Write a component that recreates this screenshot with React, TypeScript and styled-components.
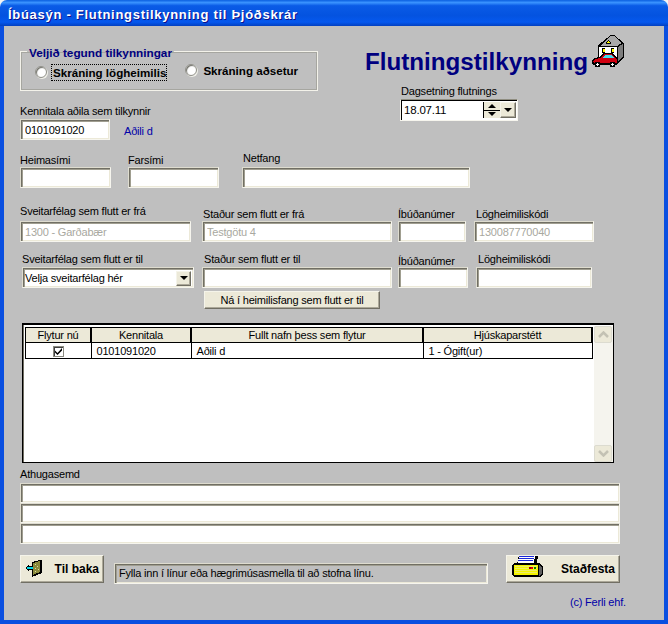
import styled, { createGlobalStyle } from "styled-components";

const sunken = `
  border: 1px solid;
  border-color: #dedccf #f6f5ee #f6f5ee #dedccf;
  box-shadow: inset 1px 1px 0 #716f64, inset 2px 2px 0 #a09e90, inset -1px -1px 0 #ece9d8;
`;

const raised = `
  border: 1px solid;
  border-color: #f5f4ea #716f64 #716f64 #f5f4ea;
  box-shadow: inset -1px -1px 0 #aca899;
  background: #ece9d8;
`;

const GlobalStyle = createGlobalStyle`
  html, body {
    margin: 0;
    padding: 0;
    background: #f4f4f4;
  }
  body {
    font-family: "Liberation Sans", Arial, sans-serif;
    font-size: 11px;
    letter-spacing: -0.2px;
    color: #000;
  }
`;

function HouseCarIcon() {
  return (
    <svg width="34" height="33" viewBox="0 0 34 33" shapeRendering="crispEdges">
      <path d="M19 0h3l10 8v15l-6 5H6V10Z" fill="#000" />
      <path d="M19 1h3l8 7-5 3H8Z" fill="#a8a8a8" />
      <path d="M26 12l5-3v13l-5 4Z" fill="#7c7c7c" />
      <path d="M7 12h18v15H7Z" fill="#fff" />
      <path d="M14 8l2-3h1l2 3v1h-5Z" fill="#000" />
      <path d="M15 8l1-2h1l1 2Z" fill="#ffff00" />
      <path d="M10 13h3v5h-3ZM19 13h3v5h-3Z" fill="#000" />
      <path d="M11 14h2v3h-2ZM20 14h2v3h-2Z" fill="#ffff00" />
      <path d="M15 18h4v4h-4Z" fill="#ffff00" />
      <path d="M0 26l2-3 6-1 3-4h10l3 4 2 1v5l-2 2H1l-1-1Z" fill="#000" />
      <path d="M1 26l2-2 6-1 3-4h8l3 4 2 1v3l-1 1H2l-1-1Z" fill="#d00010" />
      <path d="M10 23l3-3h7l2 3Z" fill="#40e0f0" />
      <circle cx="5.500" cy="29.500" r="3" fill="#000" />
      <circle cx="5.500" cy="29.500" r="1.300" fill="#fff" />
      <circle cx="20.500" cy="29.500" r="3" fill="#000" />
      <circle cx="20.500" cy="29.500" r="1.300" fill="#fff" />
    </svg>
  );
}

function BackIcon() {
  return (
    <svg width="17" height="17" viewBox="0 0 17 17" shapeRendering="crispEdges">
      <path d="M7 2l8-2h2v13l-10 4Z" fill="#000" />
      <path d="M8 3l7-2v11l-7 3Z" fill="#8a8a3c" />
      <path d="M10 4h1v1h-1ZM12 6h1v1h-1ZM10 8h1v1h-1ZM13 9h1v1h-1ZM10 11h1v1h-1Z" fill="#d8d8a0" />
      <path d="M0 8l4-4v2h4v4H4v2Z" fill="#000" />
      <path d="M1 8l2-2v1h5v2H3v1Z" fill="#00d8e8" />
    </svg>
  );
}

function PrinterIcon() {
  return (
    <svg width="31" height="22" viewBox="0 0 31 22" shapeRendering="crispEdges">
      <path d="M7 0h19l-1 9H5Z" fill="#000" />
      <path d="M7 0h16l-1 8H6Z" fill="#fff" />
      <path d="M7 1h15v1H7ZM7 3h15v1H7ZM6 5h15v1H6Z" fill="#1c28d8" />
      <path d="M2 8h25l4 3v8l-3 3H3l-3-2v-9Z" fill="#000" />
      <path d="M2 10h24v10H2Z" fill="#f4f400" />
      <path d="M27 10l3 2v7l-3 2Z" fill="#606060" />
      <path d="M3 11h22v1H3ZM3 13h22v1H3ZM3 15h22v1H3ZM3 17h22v1H3Z" fill="#e8e8b0" opacity="0.6" />
      <path d="M17 12h2v2h-2Z" fill="#a00000" />
      <path d="M19 12h2v2h-2Z" fill="#e00000" />
      <path d="M22 12h2v2h-2Z" fill="#008000" />
    </svg>
  );
}

export default function App() {
  return (
    <>
      <GlobalStyle />
      <Window>
        <TitleBar>Íbúasýn - Flutningstilkynning til Þjóðskrár</TitleBar>
        <Body>
          <TopRow>
            <LeftColumn>
              <TypeGroup>
                <legend>Veljið tegund tilkynningar</legend>
                <RadioRow>
                  <Radio />
                  <RadioLabel $focused>Skráning lögheimilis</RadioLabel>
                  <Radio $gap={19} $raise={4} />
                  <RadioLabel $raise={3}>Skráning aðsetur</RadioLabel>
                </RadioRow>
              </TypeGroup>
              <Field $width={90} $top={13}>
                <FieldLabel>Kennitala aðila sem tilkynnir</FieldLabel>
                <KennitalaRow>
                  <Input $width={90} defaultValue="0101091020" />
                  <PersonName>Aðili d</PersonName>
                </KennitalaRow>
              </Field>
            </LeftColumn>
            <HeadingColumn>
              <HeadingRow>
                <Heading>Flutningstilkynning</Heading>
                <HouseCarIcon />
              </HeadingRow>
              <Field $width={118} $top={8} $left={35}>
                <FieldLabel $indent={1}>Dagsetning flutnings</FieldLabel>
                <DateBox>
                  <DateValue>18.07.11</DateValue>
                  <Spinner>
                    <SpinButton>
                      <ArrowUp />
                    </SpinButton>
                    <SpinButton>
                      <ArrowDown />
                    </SpinButton>
                  </Spinner>
                  <DropButton>
                    <ArrowDown />
                  </DropButton>
                </DateBox>
              </Field>
            </HeadingColumn>
          </TopRow>

          <FormRow $top={12}>
            <Field $width={91}>
              <FieldLabel $drop={1}>Heimasími</FieldLabel>
              <Input $width={91} />
            </Field>
            <Field $width={91} $left={17}>
              <FieldLabel $drop={1}>Farsími</FieldLabel>
              <Input $width={91} />
            </Field>
            <Field $width={228} $left={23}>
              <FieldLabel $raise={1} $indent={1}>Netfang</FieldLabel>
              <Input $width={228} />
            </Field>
          </FormRow>

          <FormRow $top={18}>
            <Field $width={171}>
              <FieldLabel $raise={2}>Sveitarfélag sem flutt er frá</FieldLabel>
              <Input $width={171} $muted readOnly defaultValue="1300 - Garðabær" />
            </Field>
            <Field $width={190} $left={11}>
              <FieldLabel $drop={1} $indent={1}>Staður sem flutt er frá</FieldLabel>
              <Input $width={190} $muted readOnly defaultValue="Testgötu 4" />
            </Field>
            <Field $width={68} $left={6}>
              <FieldLabel $drop={1}>Íbúðanúmer</FieldLabel>
              <Input $width={68} />
            </Field>
            <Field $width={120} $left={8}>
              <FieldLabel $drop={1} $indent={2}>Lögheimiliskódi</FieldLabel>
              <Input $width={120} $muted readOnly defaultValue="130087770040" />
            </Field>
          </FormRow>

          <FormRow $top={10} $indent={2}>
            <Field $width={172}>
              <FieldLabel>Sveitarfélag sem flutt er til</FieldLabel>
              <SelectBox>
                <span>Velja sveitarfélag hér</span>
                <SelectButton>
                  <ArrowDown />
                </SelectButton>
              </SelectBox>
            </Field>
            <Field $width={190} $left={8}>
              <FieldLabel $indent={2}>Staður sem flutt er til</FieldLabel>
              <Input $width={190} />
            </Field>
            <Field $width={70} $left={6}>
              <FieldLabel $drop={2}>Íbúðanúmer</FieldLabel>
              <Input $width={70} />
            </Field>
            <Field $width={116} $left={8}>
              <FieldLabel $indent={2}>Lögheimiliskódi</FieldLabel>
              <Input $width={116} />
            </Field>
          </FormRow>

          <FetchButton>Ná í heimilisfang sem flutt er til</FetchButton>

          <TableFrame>
            <PeopleTable>
              <thead>
                <tr>
                  <th>Flytur nú</th>
                  <th>Kennitala</th>
                  <th>Fullt nafn þess sem flytur</th>
                  <th>Hjúskaparstétt</th>
                </tr>
              </thead>
              <tbody>
                <tr>
                  <CheckCell>
                    <CheckBox>
                      <svg width="9" height="9" viewBox="0 0 9 9">
                        <path d="M1 3.500l2.500 2.500L8 1v2.500L3.500 8 1 5.500Z" fill="#000" />
                      </svg>
                    </CheckBox>
                  </CheckCell>
                  <td>0101091020</td>
                  <td>Aðili d</td>
                  <td>1 - Ógift(ur)</td>
                </tr>
              </tbody>
            </PeopleTable>
            <ScrollBar>
              <ScrollButton>
                <svg width="11" height="7" viewBox="0 0 11 7">
                  <path d="M1 6L5.500 1.500L10 6" fill="none" stroke="#c4c2b4" strokeWidth="2.500" />
                </svg>
              </ScrollButton>
              <ScrollButton>
                <svg width="11" height="7" viewBox="0 0 11 7">
                  <path d="M1 1L5.500 5.500L10 1" fill="none" stroke="#c4c2b4" strokeWidth="2.500" />
                </svg>
              </ScrollButton>
            </ScrollBar>
          </TableFrame>

          <NotesLabel>Athugasemd</NotesLabel>
          <NotesStack>
            <Input $width={600} $height={20} />
            <Input $width={600} $height={20} />
            <Input $width={600} />
          </NotesStack>

          <BottomRow>
            <ActionButton $width={84} $iconTop={4}>
              <BackIcon />
              <span>Til baka</span>
            </ActionButton>
            <StatusBox>Fylla inn í línur eða hægrimúsasmella til að stofna línu.</StatusBox>
            <ActionButton $width={114} $iconTop={-1} $iconLeft={1}>
              <PrinterIcon />
              <span>Staðfesta</span>
            </ActionButton>
          </BottomRow>

          <Copyright>(c) Ferli ehf.</Copyright>
        </Body>
      </Window>
    </>
  );
}

const Window = styled.div`
  width: 668px;
  height: 624px;
  display: flex;
  flex-direction: column;
  overflow: hidden;
`;

const TitleBar = styled.div`
  height: 26px;
  flex: none;
  box-sizing: border-box;
  padding: 2px 0 0 8px;
  display: flex;
  align-items: center;
  border-radius: 7px 7px 0 0;
  background: linear-gradient(
    180deg,
    #0a5fe0 0%,
    #3a93ff 10%,
    #0a5be6 22%,
    #0453e0 60%,
    #0558ee 85%,
    #0340c0 100%
  );
  color: #fff;
  font-size: 13px;
  font-weight: 700;
  letter-spacing: 0.71px;
  text-shadow: 1px 1px 0 #0f1089;
`;

const Body = styled.div`
  flex: 1;
  box-sizing: border-box;
  background: #bfbfbf;
  border: solid #0a4fe0;
  border-width: 0 4px 4px 4px;
  padding: 0 0 0 16px;
`;

const TopRow = styled.div`
  display: flex;
  align-items: flex-start;
  padding-top: 19px;
  height: 95px;
`;

const LeftColumn = styled.div`
  width: 298px;
  flex: none;
`;

const TypeGroup = styled.fieldset`
  width: 298px;
  height: 46px;
  box-sizing: border-box;
  margin: 0;
  padding: 0 0 0 14px;
  border: 1px solid #f3f2ea;
  box-shadow: 0 0 0 1px #a6a6a0 inset;

  legend {
    margin-left: -8px;
    padding: 0 2px;
    color: #000080;
    font-size: 11.75px;
    font-weight: 700;
    line-height: 13px;
    letter-spacing: 0;
    transform: translateY(1px);
  }
`;

const RadioRow = styled.div`
  display: flex;
  align-items: center;
  height: 28px;
`;

const Radio = styled.span<{ $gap?: number; $raise?: number }>`
  width: 12px;
  height: 12px;
  flex: none;
  border-radius: 50%;
  margin-left: ${(p) => p.$gap ?? 0}px;
  margin-bottom: ${(p) => p.$raise ?? 0}px;
  background: #fff;
  border: 1px solid #8f8f88;
  box-sizing: border-box;
  box-shadow: inset 1px 1px 1px #6d6d66, 1px 1px 0 #efefe8;
`;

const RadioLabel = styled.span<{ $focused?: boolean; $raise?: number }>`
  margin-left: 5px;
  margin-bottom: ${(p) => p.$raise ?? 0}px;
  padding: 0 0 0 1px;
  font-size: 11.6px;
  line-height: 15px;
  font-weight: 700;
  letter-spacing: 0;
  white-space: nowrap;
  outline: ${(p) => (p.$focused ? "1px dotted #000" : "none")};
`;

const Field = styled.div<{ $width: number; $left?: number; $top?: number }>`
  width: ${(p) => p.$width}px;
  flex: none;
  margin-left: ${(p) => p.$left ?? 0}px;
  margin-top: ${(p) => p.$top ?? 0}px;
`;

const FieldLabel = styled.div<{ $raise?: number; $drop?: number; $indent?: number }>`
  height: 15px;
  line-height: 15px;
  white-space: nowrap;
  padding-left: ${(p) => p.$indent ?? 0}px;
  transform: translateY(${(p) => (p.$drop ?? 0) - (p.$raise ?? 0)}px);
`;

const Input = styled.input<{ $width: number; $height?: number; $muted?: boolean }>`
  ${sunken}
  display: block;
  flex: none;
  width: ${(p) => p.$width}px;
  height: ${(p) => p.$height ?? 21}px;
  box-sizing: border-box;
  margin: 0;
  padding: 1px 3px 0 4px;
  background: #fff;
  color: ${(p) => (p.$muted ? "#a8a8a0" : "#000")};
  font-family: "Liberation Sans", Arial, sans-serif;
  font-size: 11px;
  letter-spacing: -0.2px;
  border-radius: 0;
  outline: none;
`;

const KennitalaRow = styled.div`
  display: flex;
  align-items: center;
  width: 220px;
`;

const PersonName = styled.span`
  margin: 2px 0 0 14px;
  color: #0000a8;
`;

const HeadingColumn = styled.div`
  display: flex;
  flex-direction: column;
  margin-left: 47px;
`;

const HeadingRow = styled.div`
  display: flex;
  align-items: flex-start;
  margin-top: -10px;
  height: 41px;
`;

const Heading = styled.h1`
  margin: 13px 4px 0 0;
  color: #000080;
  font-size: 24.2px;
  line-height: 28px;
  font-weight: 700;
  letter-spacing: 0;
  white-space: nowrap;
`;

const DateBox = styled.div`
  width: 118px;
  height: 22px;
  box-sizing: border-box;
  display: flex;
  background: #fff;
  padding: 2px 1px 2px 2px;
  border: 1px solid;
  border-color: #8f8d80 #f6f5ee #f6f5ee #f6f5ee;
  box-shadow: inset 1px 1px 0 #000;
`;

const DateValue = styled.div`
  flex: 1;
  padding: 2px 0 0 1px;
  font-size: 11.5px;
`;

const Spinner = styled.div`
  width: 16px;
  display: flex;
  flex-direction: column;
  border-left: 1px solid #000;
`;

const SpinButton = styled.div`
  flex: 1;
  box-sizing: border-box;
  display: flex;
  align-items: center;
  justify-content: center;
  background: #ece9d8;
  border-bottom: 1px solid #000;

  &:last-child {
    border-bottom: none;
  }
`;

const DropButton = styled.div`
  ${raised}
  width: 16px;
  box-sizing: border-box;
  display: flex;
  align-items: center;
  justify-content: center;
`;

const ArrowDown = styled.span`
  width: 0;
  height: 0;
  border: 4px solid transparent;
  border-top-color: #000;
  border-bottom-width: 0;
`;

const ArrowUp = styled.span`
  width: 0;
  height: 0;
  border: 4px solid transparent;
  border-bottom-color: #000;
  border-top-width: 0;
`;

const FormRow = styled.div<{ $top: number; $indent?: number }>`
  display: flex;
  margin-top: ${(p) => p.$top}px;
  padding-left: ${(p) => p.$indent ?? 0}px;
`;

const SelectBox = styled.div`
  ${sunken}
  width: 172px;
  height: 21px;
  box-sizing: border-box;
  display: flex;
  align-items: center;
  justify-content: space-between;
  background: #fff;
  padding: 1px 2px 0 2px;
`;

const SelectButton = styled.div`
  ${raised}
  width: 15px;
  height: 15px;
  box-sizing: border-box;
  display: flex;
  align-items: center;
  justify-content: center;
`;

const FetchButton = styled.div`
  ${raised}
  width: 176px;
  height: 18px;
  box-sizing: border-box;
  margin: 3px 0 0 184px;
  text-align: center;
  line-height: 16px;
`;

const TableFrame = styled.div`
  display: flex;
  justify-content: space-between;
  width: 592px;
  height: 140px;
  box-sizing: border-box;
  margin: 14px 0 0 2px;
  padding: 2px 0 0 1px;
  background: #fff;
  border: 1px solid #000;
  border-width: 2px 1px 1px 1px;
  box-shadow: inset 1px 0 0 #716f64;
`;

const PeopleTable = styled.table`
  width: 568px;
  height: 31px;
  flex: none;
  margin-left: 1px;
  table-layout: fixed;
  border-collapse: collapse;

  th {
    height: 14px;
    padding: 0;
    background: #ece9d8;
    border: 1px solid #000;
    border-right-width: 2px;
    font-weight: 400;
    text-align: center;
  }

  th:nth-child(1) {
    width: 64px;
  }

  th:nth-child(2) {
    width: 98px;
  }

  th:nth-child(3) {
    width: 230px;
  }

  td {
    height: 15px;
    padding: 0 0 0 5px;
    border: 1px solid #000;
  }
`;

const CheckCell = styled.td`
  && {
    padding: 0;
    text-align: center;
  }
`;

const CheckBox = styled.span`
  display: inline-flex;
  align-items: center;
  justify-content: center;
  width: 11px;
  height: 11px;
  box-sizing: border-box;
  vertical-align: middle;
  border: 1px solid #8a8a80;
  box-shadow: inset 1px 1px 0 #404040;
  background: #fff;
`;

const ScrollBar = styled.div`
  width: 19px;
  flex: none;
  margin-top: -1px;
  display: flex;
  flex-direction: column;
  justify-content: space-between;
  background: #f5f4ee;
`;

const ScrollButton = styled.div`
  width: 18px;
  height: 17px;
  display: flex;
  align-items: center;
  justify-content: center;
  border: 1px solid #dcdbd0;
  box-sizing: border-box;
  border-radius: 2px;
  background: #ece9d8;
`;

const NotesLabel = styled.div`
  margin-top: 4px;
  height: 15px;
  line-height: 15px;
`;

const NotesStack = styled.div`
  display: flex;
  flex-direction: column;
  margin-top: 1px;
  width: 600px;
`;

const BottomRow = styled.div`
  display: flex;
  align-items: flex-start;
  margin-top: 11px;
  width: 600px;
`;

const ActionButton = styled.div<{ $width: number; $iconTop: number; $iconLeft?: number }>`
  ${raised}
  width: ${(p) => p.$width}px;
  height: 28px;
  box-sizing: border-box;
  display: flex;
  align-items: flex-start;
  justify-content: space-between;
  padding: 0 4px 0 4px;
  overflow: hidden;
  flex: none;

  svg {
    flex: none;
    margin-top: ${(p) => p.$iconTop}px;
    margin-left: ${(p) => p.$iconLeft ?? 0}px;
  }

  span {
    align-self: center;
    font-size: 12px;
    font-weight: 700;
    letter-spacing: 0;
  }
`;

const StatusBox = styled.div`
  ${sunken}
  width: 374px;
  height: 21px;
  box-sizing: border-box;
  margin: 8px 18px 0 10px;
  padding: 1px 3px 0 4px;
  line-height: 17px;
  white-space: nowrap;
`;

const Copyright = styled.div`
  margin: 11px 0 0 550px;
  color: #0000a8;
  line-height: 14px;
`;
